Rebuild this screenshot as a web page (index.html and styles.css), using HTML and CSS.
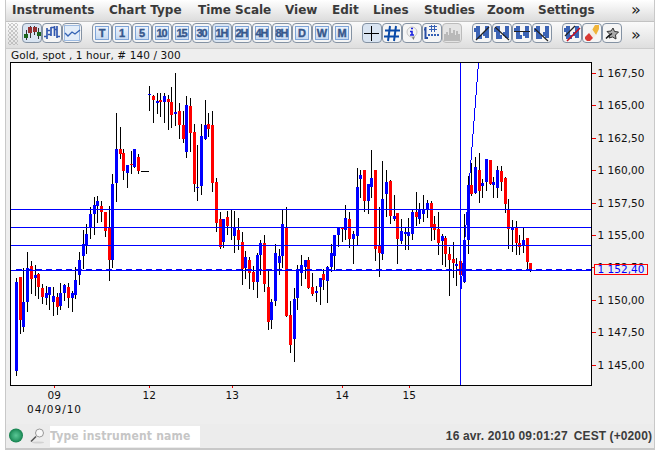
FILE: index.html
```
<!DOCTYPE html>
<html lang="en">
<head>
    <meta charset="UTF-8">
    <meta name="viewport" content="width=device-width, initial-scale=1.0">
    <title>Gold, spot</title>
    <link rel="stylesheet" href="styles.css">
</head>
<body>

    <div class="window">
        <nav class="menubar">
            <span>Instruments</span>
            <span>Chart Type</span>
            <span>Time Scale</span>
            <span>View</span>
            <span>Edit</span>
            <span>Lines</span>
            <span>Studies</span>
            <span>Zoom</span>
            <span>Settings</span>
            <span class="more">»</span>
        </nav>

        <div class="toolbar">
            <div class="grip"></div>
            <div class="group">
                <button class="tool active">
                    <svg viewBox="0 0 18 18"><path d="M3.5 6v10M7.5 2v12M11.5 2v9M15.5 4v11" stroke="#333"/><path d="M1 10h4v4H1zM14 8h4v4h-4z" fill="#1a651a"/><path d="M5 3h4v6H5zM10 3h4v5h-4z" fill="#943030"/></svg>
                </button>
                <button class="tool">
                    <svg viewBox="0 0 18 18"><path d="M4 4v11M1 12.500h3M4 6.500h3M8 3v9M5 10.500h3M8 3.500h4M11.500 2v10M14 2v12M11 5.500h3M14 12.500h3" stroke="#3359b0" stroke-width="1.700" fill="none"/></svg>
                </button>
                <button class="tool">
                    <svg viewBox="0 0 18 18"><rect x="1.500" y="1.500" width="15" height="15" fill="#e3edf8" stroke="#9dbbe2"/><path d="M2 9l3 3 4-4 3 2 5-4" stroke="#3463b4" stroke-width="1.300" fill="none"/></svg>
                </button>
            </div>
            <div class="group">
                <button class="tool"><span class="period">T</span></button>
                <button class="tool"><span class="period">1</span></button>
                <button class="tool"><span class="period">5</span></button>
                <button class="tool"><span class="period">10</span></button>
                <button class="tool"><span class="period">15</span></button>
                <button class="tool"><span class="period">30</span></button>
                <button class="tool active"><span class="period">1H</span></button>
                <button class="tool"><span class="period">2H</span></button>
                <button class="tool"><span class="period">4H</span></button>
                <button class="tool"><span class="period">8H</span></button>
                <button class="tool"><span class="period">D</span></button>
                <button class="tool"><span class="period">W</span></button>
                <button class="tool"><span class="period">M</span></button>
            </div>
            <div class="group">
                <button class="tool active">
                    <svg viewBox="0 0 18 18"><path d="M1 9.500h15M8.500 2v15" stroke="#000"/></svg>
                </button>
                <button class="tool">
                    <svg viewBox="0 0 18 18"><path d="M7 2L5 17M13 2l-2 15M2 6.500h15M1 12.500h15" stroke="#0a4aa8" stroke-width="2"/></svg>
                </button>
                <button class="tool">
                    <svg viewBox="0 0 18 18"><path d="M8 12l2.500 4 2-5z" fill="#777"/><circle cx="9" cy="8" r="5" fill="#f2f2f2" stroke="#c4c4c4"/><path d="M8 4.500h2M7 7.500h2V11M7 11h4" stroke="#1a22e0" stroke-width="1.600" fill="none"/></svg>
                </button>
                <button class="tool">
                    <svg viewBox="0 0 18 18"><path d="M2.500 3v12M1 5.500h2M2 14h3" stroke="#2a4fa5" stroke-width="2"/><path d="M8.500 1v7M11.500 1v7M6 2.500h8M6 5.500h8" stroke="#3560b5"/><path d="M5 11h12" stroke="#3560b5" stroke-width="2" stroke-dasharray="2 1"/></svg>
                </button>
                <button class="tool disabled">
                    <svg viewBox="0 0 18 18"><path d="M1 17V10h2V8h2v3h1V4h2v5h2V6h2v5h1V7h2v3h2v7z" fill="#b9b9b9"/></svg>
                </button>
            </div>
            <div class="group">
                <button class="tool">
                    <svg viewBox="0 0 18 18"><use href="#bars"/><path d="M3 16L16 3" stroke="#222" stroke-width="1.200"/></svg>
                </button>
                <button class="tool">
                    <svg viewBox="0 0 18 18"><use href="#bars"/><path d="M2 3l14 13" stroke="#222" stroke-width="1.200"/></svg>
                </button>
                <button class="tool">
                    <svg viewBox="0 0 18 18"><use href="#bars"/><path d="M1 7.500h16" stroke="#222"/></svg>
                </button>
                <button class="tool">
                    <svg viewBox="0 0 18 18"><use href="#bars"/><path d="M2 5l13 12" stroke="#222" stroke-width="1.200"/></svg>
                </button>
            </div>
            <div class="group">
                <button class="tool">
                    <svg viewBox="0 0 18 18"><use href="#bars"/><path d="M2 12L12 2" stroke="#222" stroke-width="1.200"/><path d="M4 17L17 4" stroke="#c80f1c" stroke-width="1.600"/></svg>
                </button>
                <button class="tool">
                    <svg viewBox="0 0 18 18"><path d="M9 6l3-5h4v4l-3 6z" fill="#f0b43a"/><path d="M6 9l3-4 4 6-3 3z" fill="#f2ece4"/><path d="M6 9l4 5-3 3H4l-2-2v-2z" fill="#d93a35"/></svg>
                </button>
                <button class="tool">
                    <svg viewBox="0 0 18 18"><path d="M10 4l1.500 3.500 4 .5-3 3 .5 4-3.500-2-3.500 1 1-3.500-3-3 4-.5z" fill="#aaa" stroke="#333"/><path d="M3 14.500l3-3 3-2" stroke="#111" stroke-width="1.500" fill="none"/></svg>
                </button>
            </div>
            <span class="more">»</span>
        </div>

        <div class="chart-title">Gold, spot , 1 hour, # 140 / 300</div>

        <svg class="chart" viewBox="6 62 648 362">
            <defs>
                <g id="bars">
                    <path d="M3 2h4v13H3zM12 2h4v12h-4z" fill="#3b63b5"/>
                    <path d="M1 4h2v4H1zM7 11h2v4H7zM10 8h2v4h-2z" fill="#3b63b5"/>
                </g>
            </defs>
            <rect class="plot" x="10.5" y="62.5" width="581" height="323"/>
            <g id="candles"></g>
            <g class="lines">
                <path d="M11 209.500H591M11 227.500H591M11 245.500H591M11 270.500H591"/>
                <path d="M16 269.500H591" stroke-dasharray="6 4"/>
                <path d="M460.500 63V385M460.500 296L478.500 63"/>
            </g>
            <g id="axis"></g>
            <g class="last-price">
                <rect x="594.5" y="264.5" width="53" height="10"/>
                <text x="597.5" y="273" textLength="47">1 152,40</text>
            </g>
        </svg>

        <footer class="statusbar">
            <svg class="led" viewBox="0 0 16 16">
                <defs>
                    <radialGradient id="green"><stop offset="0" stop-color="#5ac795"/><stop offset=".6" stop-color="#34a370"/><stop offset="1" stop-color="#14804d"/></radialGradient>
                </defs>
                <circle cx="8" cy="7.500" r="7" fill="url(#green)"/>
            </svg>
            <svg class="search-icon" viewBox="0 0 16 16">
                <ellipse cx="8" cy="14.500" rx="6" ry="1" fill="#d2d2d2"/>
                <path d="M6 8.500L1 13.500" stroke="#555" stroke-width="1.600"/>
                <circle cx="9.500" cy="5" r="4" fill="#f8f8f8" stroke="#999"/>
            </svg>
            <input class="search" type="text" placeholder="Type instrument name">
            <span class="clock">16 avr. 2010 09:01:27</span>
            <span class="zone">CEST (+0200)</span>
        </footer>
    </div>

    <script>
        // x, high, low, body top, body bottom, up (1) or down (0)
        const candles = [
            [16,278,376,282,371,1], [20,277,334,277,320,0], [23,268,332,302,327,1], [27,252,312,268,302,1],
            [31,261,294,266,279,0], [35,265,296,275,278,1], [38,273,299,274,287,0], [42,284,304,288,297,0],
            [46,286,305,293,298,1], [49,287,310,287,295,1], [53,287,316,296,302,1], [57,293,315,297,307,0],
            [60,283,310,293,306,1], [64,284,301,285,293,1], [68,283,308,287,298,0], [72,291,312,293,298,1],
            [75,267,299,280,295,1], [79,252,285,260,275,1], [83,230,269,244,256,1], [86,224,254,234,245,1],
            [90,207,239,214,227,1], [94,197,235,205,214,1], [97,196,223,201,206,1], [101,201,222,206,212,0],
            [105,212,237,212,231,0], [109,206,281,227,260,0], [112,174,268,184,260,1], [116,113,202,149,183,1],
            [120,127,159,149,154,0], [123,149,180,153,171,0], [127,165,188,165,173,1], [131,151,174,164,165,0],
            [134,149,168,149,167,1], [138,154,174,157,171,0], [149,86,111,94,95,1], [153,95,123,96,100,0],
            [157,93,114,101,103,1], [160,93,117,100,102,0], [164,93,123,96,102,1], [168,95,130,99,102,0],
            [171,87,128,102,115,0], [175,73,126,112,114,1], [179,103,139,111,125,0], [183,111,143,125,139,0],
            [186,96,158,105,152,1], [190,98,152,106,133,0], [194,124,192,132,184,0], [197,145,201,187,188,1],
            [201,124,195,136,186,1], [205,100,140,125,139,1], [208,113,137,124,129,0], [212,111,192,125,183,0],
            [216,178,232,182,223,0], [220,212,249,219,247,0], [223,219,248,219,242,1], [227,211,235,217,226,0],
            [231,209,240,227,228,1], [234,211,253,227,236,1], [238,218,250,230,240,0], [242,232,285,242,269,0],
            [245,251,279,257,268,1], [249,257,289,260,273,0], [253,266,290,272,282,0], [257,253,298,255,282,1],
            [260,240,275,243,255,1], [264,235,292,243,284,0], [268,270,330,287,322,0], [271,299,329,302,320,1],
            [275,244,306,253,301,1], [279,249,275,256,263,1], [282,210,268,224,256,1], [286,207,317,227,316,0],
            [290,301,353,315,345,0], [294,288,362,299,339,1], [297,265,310,270,298,1], [301,255,286,265,273,1],
            [305,260,279,260,267,1], [308,257,289,260,288,0], [312,273,296,287,294,0], [316,286,302,291,293,1],
            [320,278,305,278,287,1], [323,269,290,274,280,0], [327,266,303,267,281,1], [331,244,272,253,267,1],
            [334,235,270,235,256,1], [338,227,247,228,235,1], [342,227,242,227,229,0], [345,205,240,218,230,1],
            [349,212,248,219,239,0], [353,231,264,234,239,1], [357,168,245,187,236,1], [360,170,198,175,179,1],
            [364,170,212,170,201,0], [368,184,214,184,201,1], [371,150,198,178,187,1], [375,170,261,170,249,0],
            [379,207,277,245,253,0], [382,161,260,199,254,1], [386,170,217,182,194,1], [390,180,224,181,216,0],
            [394,195,221,216,219,1], [397,213,264,213,239,0], [401,219,244,231,241,1], [405,228,250,232,234,1],
            [408,218,250,232,236,1], [412,210,240,212,234,1], [416,192,226,212,217,0], [419,203,224,209,219,1],
            [423,195,222,210,214,1], [427,200,218,203,209,1], [431,201,241,203,227,0], [434,216,240,224,230,0],
            [438,212,255,229,243,0], [442,234,265,236,241,1], [445,236,267,238,254,0], [449,247,296,254,260,0],
            [453,242,278,259,263,0], [456,258,286,264,266,1], [460,261,296,261,275,0], [464,214,283,240,282,1],
            [468,176,254,185,240,1], [471,163,196,185,194,0], [475,157,194,167,193,1], [479,153,203,170,191,0],
            [482,179,198,183,186,1], [486,159,191,159,182,1], [490,160,185,160,184,0], [493,177,198,182,185,1],
            [497,166,198,170,188,1], [501,166,191,171,182,0], [505,177,213,178,204,0], [508,199,249,209,229,0],
            [512,220,252,227,230,1], [516,221,255,227,243,0], [519,235,255,243,247,0], [523,228,253,240,245,1],
            [527,238,270,238,262,0], [530,263,272,263,270,0]
        ];

        const prices = [
            [73, '1 167,50'], [105, '1 165,00'], [138, '1 162,50'], [170, '1 160,00'], [203, '1 157,50'],
            [235, '1 155,00'], [267, '1 152,50'], [300, '1 150,00'], [332, '1 147,50'], [365, '1 145,00']
        ];
        const days = [[54, '09'], [149, '12'], [232, '13'], [342, '14'], [409, '15']];

        let out = '';
        for (const [x, high, low, top, bottom, up] of candles) {
            out += `<rect class="wick" x="${x}" y="${high}" width="1" height="${low - high}"/>`;
            out += `<rect class="${up ? 'up' : 'down'}" x="${x - 1}" y="${top}" width="3" height="${bottom - top}"/>`;
        }
        // flat bars with no trades
        out += '<rect class="wick" x="141" y="171" width="8" height="1"/>';
        document.getElementById('candles').innerHTML = out;

        out = '';
        for (const [y, label] of prices) {
            out += `<rect class="tick" x="592" y="${y}" width="4" height="1"/>`;
            out += `<text x="597.5" y="${y + 4}" textLength="47">${label}</text>`;
        }
        for (const [x, label] of days) {
            out += `<rect class="tick" x="${x}" y="386" width="1" height="2"/>`;
            out += `<text x="${x - 6.5}" y="399" textLength="13.500">${label}</text>`;
        }
        out += '<text x="27" y="413" textLength="54">04/09/10</text>';
        document.getElementById('axis').innerHTML = out;
    </script>

</body>
</html>
```
FILE: styles.css
```
body {
    margin: 0;
    background: #fff;
    font-family: "DejaVu Sans", sans-serif;
}
.window {
    box-sizing: border-box;
    width: 650px;
    height: 450px;
    margin-left: 5px;
    border: 1px solid #c8c8c8;
    border-width: 0 1px 2px;
    background: #eee;
}
.menubar {
    box-sizing: border-box;
    display: grid;
    grid-template-columns: 97px 89px 87px 47px 41px 51px 63px 51px 93px 1fr;
    height: 22px;
    padding-left: 6px;
    border-bottom: 1px solid #c2c2c2;
    background: linear-gradient(#fff, #dcdcdc);
    color: #3a3a3a;
    font-size: 12px;
    font-weight: bold;
    line-height: 20px;
    white-space: nowrap;
}
.more {
    color: #222;
    font-size: 16px;
    font-weight: normal;
}
.toolbar {
    box-sizing: border-box;
    display: flex;
    gap: 10px;
    height: 27px;
    padding: 1px 0 0 2px;
    border-bottom: 1px solid #ccc;
    background: linear-gradient(#fafafa, #dedede);
}
.toolbar .more {
    margin-left: -1px;
    line-height: 23px;
}
.grip {
    width: 10px;
    height: 22px;
    margin-right: -6px;
    background-image: radial-gradient(#999 0.5px, transparent 0.9px), radial-gradient(#999 0.5px, transparent 0.9px);
    background-position: 0 0, 2px 2px;
    background-size: 4px 4px;
}
.group {
    display: flex;
}
.tool {
    box-sizing: border-box;
    display: flex;
    align-items: center;
    justify-content: center;
    width: 20px;
    height: 20px;
    padding: 0;
    border: 1px solid #8492a3;
    border-radius: 4px;
    background: #f5f5f5;
}
.tool.active {
    background: #d9e4f1;
}
.tool.disabled {
    border-color: #bbb;
    background: #e4e4e4;
}
.tool svg {
    width: 18px;
    height: 18px;
}
.period {
    box-sizing: border-box;
    width: 14px;
    height: 14px;
    border: 1px solid #7ea5da;
    background: linear-gradient(#edf3fb, #c7daf1);
    color: #36578c;
    font: bold 11px/13px "Liberation Sans", sans-serif;
    letter-spacing: -1px;
    text-indent: -1px;
    display: flex;
    justify-content: center;
    -webkit-text-stroke: 0.4px #36578c;
}
.chart-title {
    height: 13px;
    padding-left: 5px;
    color: #111;
    font-size: 10.5px;
    letter-spacing: 0.1px;
    line-height: 13px;
    white-space: pre;
}
.chart {
    display: block;
    width: 648px;
    height: 362px;
    shape-rendering: crispEdges;
    font-size: 10.5px;
    fill: #111;
}
.plot {
    fill: #fff;
    stroke: #000;
}
.wick {
    fill: #000;
}
.up {
    fill: #00f;
}
.down {
    fill: #f00;
}
.lines {
    fill: none;
    stroke: #00f;
}
.tick {
    fill: #e00;
}
.last-price rect {
    fill: #eee;
    stroke: #f00;
}
.last-price text {
    fill: #00f;
}
.statusbar {
    box-sizing: border-box;
    display: flex;
    align-items: center;
    height: 24px;
    padding: 0 2px;
    background: #ececec;
    color: #3c3c3c;
    font: bold 12px "Liberation Sans", sans-serif;
}
.led {
    width: 16px;
    height: 16px;
}
.search-icon {
    width: 16px;
    height: 16px;
    margin: 0 4px 0 6px;
}
.search {
    box-sizing: border-box;
    width: 150px;
    height: 21px;
    padding: 0;
    border: 0;
    background: #fff;
    font: bold 12px "DejaVu Sans Condensed", "DejaVu Sans", sans-serif;
    font-stretch: condensed;
    letter-spacing: 0.2px;
}
.search::placeholder {
    color: #c6c6c6;
}
.clock {
    margin-left: auto;
    letter-spacing: 0.15px;
}
.zone {
    margin-left: 6px;
    letter-spacing: 0.1px;
}
```
